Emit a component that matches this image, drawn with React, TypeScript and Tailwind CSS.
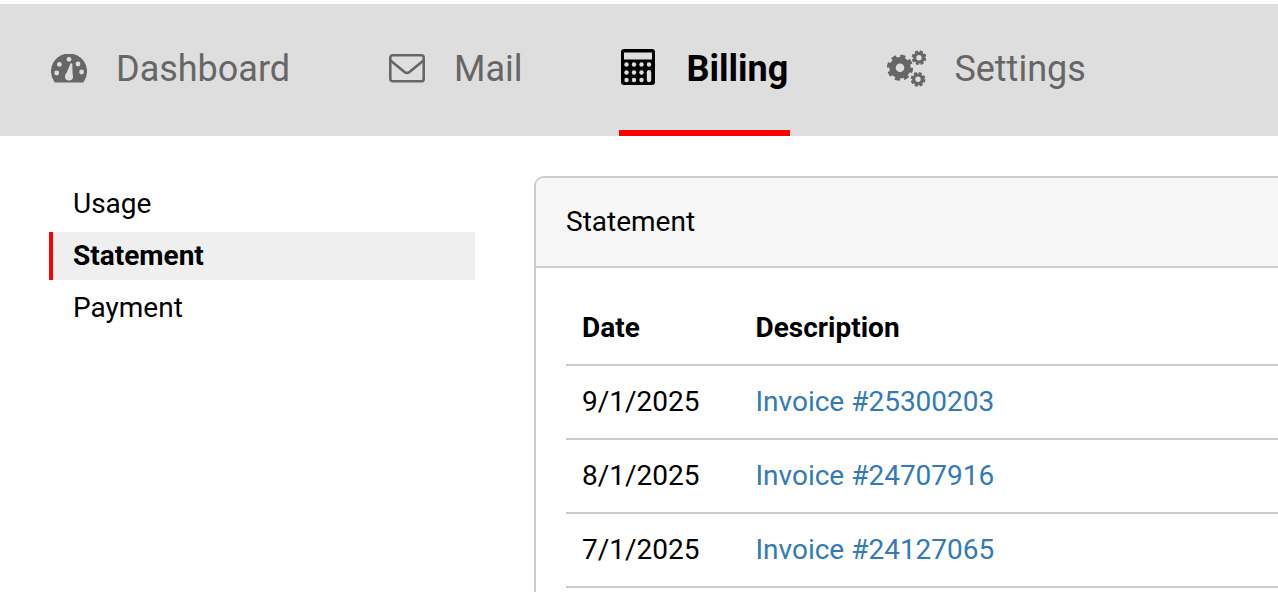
import React from 'react';

const NAV_BG = '#dedede';

const DashboardIcon = () => (
    <svg width="36" height="29" viewBox="0 0 36 29" className="shrink-0" fill="currentColor">
        <path d="M4.5 28.5 Q3.8 28.5 3.4 28 A18 18 0 1 1 32.6 28 Q32.2 28.5 31.5 28.5 Z" />
        <circle cx="18" cy="5.3" r="2.4" fill={NAV_BG} />
        <circle cx="8.4" cy="10.4" r="2.4" fill={NAV_BG} />
        <circle cx="5.7" cy="19" r="2.4" fill={NAV_BG} />
        <circle cx="27" cy="10" r="2.4" fill={NAV_BG} />
        <circle cx="30.6" cy="18" r="2.4" fill={NAV_BG} />
        <circle cx="18" cy="22.5" r="4" fill={NAV_BG} />
        <path d="M14.8 20.8 L19.5 9.6 Q20.6 8.6 21.3 9.9 L21.6 21.5 Z" fill={NAV_BG} />
    </svg>
);

const MailIcon = () => (
    <svg width="36" height="29" viewBox="0 0 36 29" className="shrink-0" fill="none" stroke="currentColor" strokeWidth="2.6" strokeLinejoin="round">
        <rect x="1.3" y="1.3" width="33.4" height="26" rx="2.4" />
        <path d="M1.5 6.5 L15.5 18 Q18 19.8 20.5 18 L34.5 6.5" />
    </svg>
);

const CalculatorIcon = () => (
    <svg width="34" height="36" viewBox="0 0 34 36" className="shrink-0">
        <rect x="0" y="0" width="34" height="36" rx="3" fill="#000" />
        <rect x="3" y="3.5" width="28" height="7" fill={NAV_BG} />
        {[15.5, 23.5, 31].map(cy =>
            [5.5, 13, 20.5, 28].map(cx =>
                cx === 28 && cy > 16 ? null : <circle key={`${cx}-${cy}`} cx={cx} cy={cy} r="2.2" fill={NAV_BG} />
            )
        )}
        <rect x="25.8" y="21" width="4.4" height="12.2" rx="2.2" fill={NAV_BG} />
    </svg>
);

// ring plus a dashed outer ring for the teeth
const Gear = ({ cx, cy, ring, ringWidth, teeth, toothDepth, dash }: { cx: number; cy: number; ring: number; ringWidth: number; teeth: number; toothDepth: number; dash: string }) => (
    <g fill="none" stroke="currentColor">
        <circle cx={cx} cy={cy} r={ring} strokeWidth={ringWidth} />
        <circle cx={cx} cy={cy} r={teeth} strokeWidth={toothDepth} strokeDasharray={dash} />
    </g>
);

const CogsIcon = () => (
    <svg width="39" height="37" viewBox="0 0 39 37" className="shrink-0">
        <Gear cx={13} cy={17.7} ring={7.5} ringWidth={6.4} teeth={11.4} toothDepth={3.4} dash="5 3.95" />
        <Gear cx={32} cy={7.7} ring={4.3} ringWidth={3.2} teeth={6.1} toothDepth={2.6} dash="3 1.79" />
        <Gear cx={31} cy={29.3} ring={4.3} ringWidth={3.2} teeth={6.1} toothDepth={2.6} dash="3 1.79" />
    </svg>
);

const rows = [
    { date: '9/1/2025', invoice: 'Invoice #25300203' },
    { date: '8/1/2025', invoice: 'Invoice #24707916' },
    { date: '7/1/2025', invoice: 'Invoice #24127065' },
];

export default function App() {
    return (
        <div className="h-[592px] w-[1278px] overflow-hidden bg-white pt-[4px] text-black font-['Roboto',sans-serif]">
            {/* top tabs */}
            <div className="flex h-[132px] bg-[#dedede] pl-[49px]">
                <div className="flex h-full w-[240px] items-center gap-[29px] pb-[4px] pl-[2px] text-[#666]">
                    <DashboardIcon />
                    <span className="mt-[2px] text-[36px]">Dashboard</span>
                </div>
                <div className="ml-[100px] flex h-full items-center gap-[29px] pb-[4px] text-[#666]">
                    <MailIcon />
                    <span className="mt-[2px] text-[36px]">Mail</span>
                </div>
                <div className="ml-[96px] flex h-full items-center gap-[32px] border-b-[6px] border-[#f00] px-[2px] text-black">
                    <CalculatorIcon />
                    <span className="mt-[3px] text-[36px] font-bold">Billing</span>
                </div>
                <div className="ml-[97px] flex h-full items-center gap-[28px] pb-[4px] text-[#666]">
                    <CogsIcon />
                    <span className="mt-[2px] text-[36px]">Settings</span>
                </div>
            </div>

            <div className="flex pl-[49px] pt-[40px]">
                {/* side menu */}
                <div className="flex w-[426px] shrink-0 flex-col gap-[4px] pt-[4px] text-[28px]">
                    <div className="flex h-[48px] items-center pl-[24px]">Usage</div>
                    <div className="flex h-[48px] items-center border-l-[4px] border-[#f00] bg-[#efefef] pl-[20px] font-bold">Statement</div>
                    <div className="flex h-[48px] items-center pl-[24px]">Payment</div>
                </div>

                {/* statement panel */}
                <div className="ml-[59px] w-[800px] shrink-0 rounded-t-[10px] border-2 border-[#ccc] pb-[60px] text-[28px]">
                    <div className="flex h-[90px] items-center rounded-t-[8px] border-b-2 border-[#ccc] bg-[#f7f7f7] pl-[30px]">Statement</div>
                    <div className="px-[30px] pt-[24px]">
                        <div className="flex h-[74px] items-center border-b-2 border-[#ccc] pl-[16px] font-bold">
                            <span className="w-[173.5px]">Date</span>
                            <span>Description</span>
                        </div>
                        {rows.map(row => (
                            <div key={row.date} className="flex h-[74px] items-center border-b-2 border-[#ccc] pl-[16px]">
                                <span className="w-[173.5px]">{row.date}</span>
                                <a className="text-[#337ab7]">{row.invoice}</a>
                            </div>
                        ))}
                    </div>
                </div>
            </div>
        </div>
    );
}
